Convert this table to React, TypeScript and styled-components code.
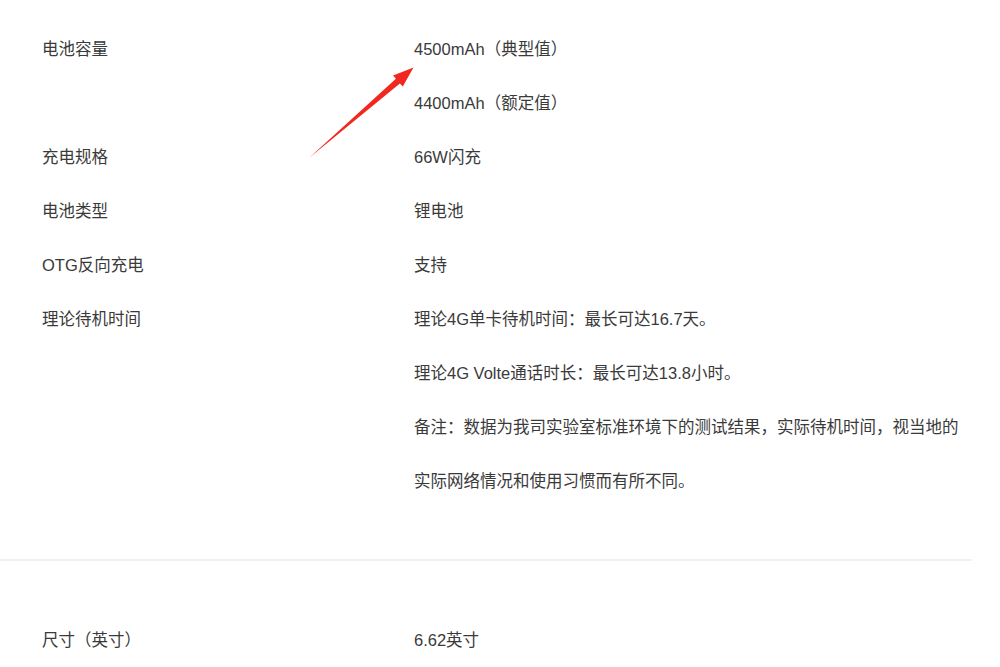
import React from "react";
import styled, { createGlobalStyle } from "styled-components";

const Global = createGlobalStyle`
  html, body { margin: 0; padding: 0; background: #fff; }
  body { font-family: "Liberation Sans", "Noto Sans CJK SC", sans-serif; }
`;

const Page = styled.div`
  position: relative;
  width: 972px;
  padding-top: 22px;
`;

const Section = styled.section<{ $divider?: boolean }>`
  display: flex;
  flex-direction: column;
  padding-bottom: ${(p) => (p.$divider ? "51px" : "0")};
  border-bottom: ${(p) => (p.$divider ? "2px solid #f2f2f2" : "none")};
  margin-bottom: ${(p) => (p.$divider ? "52px" : "0")};
`;

const Row = styled.div`
  display: flex;
  padding-left: 42px;
`;

const Label = styled.div`
  width: 372px;
  flex: none;
  font-size: 16.5px;
  line-height: 54px;
  color: #3a3a3a;
`;

const Values = styled.div`
  display: flex;
  flex-direction: column;
  flex: 1;
`;

const Value = styled.div`
  font-size: 16.5px;
  line-height: 54px;
  color: #3a3a3a;
  white-space: nowrap;
`;

const Arrow = styled.svg`
  position: absolute;
  left: 0;
  top: 0;
  pointer-events: none;
`;

type Spec = { label: string; values: string[] };

const battery: Spec[] = [
  { label: "电池容量", values: ["4500mAh（典型值）", "4400mAh（额定值）"] },
  { label: "充电规格", values: ["66W闪充"] },
  { label: "电池类型", values: ["锂电池"] },
  { label: "OTG反向充电", values: ["支持"] },
  {
    label: "理论待机时间",
    values: [
      "理论4G单卡待机时间：最长可达16.7天。",
      "理论4G Volte通话时长：最长可达13.8小时。",
      "备注：数据为我司实验室标准环境下的测试结果，实际待机时间，视当地的",
      "实际网络情况和使用习惯而有所不同。",
    ],
  },
];

const size: Spec[] = [{ label: "尺寸（英寸）", values: ["6.62英寸"] }];

const SpecRows = ({ items }: { items: Spec[] }) => (
  <>
    {items.map((s) => (
      <Row key={s.label}>
        <Label>{s.label}</Label>
        <Values>
          {s.values.map((v) => (
            <Value key={v}>{v}</Value>
          ))}
        </Values>
      </Row>
    ))}
  </>
);

export default function App() {
  return (
    <>
      <Global />
      <Page>
        <Section $divider>
          <SpecRows items={battery} />
        </Section>
        <Section>
          <SpecRows items={size} />
        </Section>
        <Arrow width="1000" height="667" viewBox="0 0 1000 667">
          <polygon
            points="309,158 399.9,83.4 402.8,86.6 413.5,67.5 393.1,75.6 395.9,78.8"
            fill="#f0281f"
          />
        </Arrow>
      </Page>
    </>
  );
}
